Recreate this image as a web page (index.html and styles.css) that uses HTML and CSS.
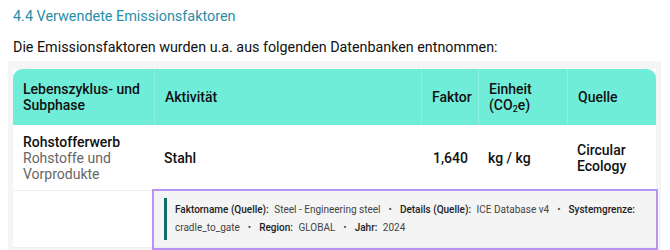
FILE: index.html
```html
<!DOCTYPE html>
<html lang="de">
<head>
<meta charset="utf-8">
<title>Emissionsfaktoren</title>
<link rel="stylesheet" href="styles.css">
</head>
<body>
<div class="page">
  <h2 class="section-title">4.4 Verwendete Emissionsfaktoren</h2>
  <p class="intro">Die Emissionsfaktoren wurden u.a. aus folgenden Datenbanken entnommen:</p>
  <div class="table-wrap">
    <table class="ef-table">
      <colgroup>
        <col class="c-phase">
        <col class="c-act">
        <col class="c-fak">
        <col class="c-unit">
        <col class="c-src">
      </colgroup>
      <thead>
        <tr>
          <th class="th-first">Lebenszyklus- und Subphase</th>
          <th>Aktivität</th>
          <th class="num">Faktor</th>
          <th>Einheit (CO<sub>2</sub>e)</th>
          <th class="th-last">Quelle</th>
        </tr>
      </thead>
      <tbody>
        <tr class="row-main">
          <td class="phase"><div class="phase-name">Rohstofferwerb</div><div class="phase-sub">Rohstoffe und Vorprodukte</div></td>
          <td class="strong">Stahl</td>
          <td class="strong num">1,640</td>
          <td class="strong">kg / kg</td>
          <td class="strong">Circular Ecology</td>
        </tr>
        <tr class="row-detail">
          <td class="empty"></td>
          <td colspan="4" class="detail-cell">
            <div class="detail">
              <span class="lbl">Faktorname (Quelle):</span> <span class="val">Steel - Engineering steel</span><span class="sep">•</span><span class="lbl">Details (Quelle):</span> <span class="val">ICE Database v4</span><span class="sep">•</span><span class="lbl">Systemgrenze:</span> <span class="val">cradle_to_gate</span><span class="sep">•</span><span class="lbl">Region:</span> <span class="val">GLOBAL</span><span class="sep">•</span><span class="lbl">Jahr:</span> <span class="val">2024</span>
            </div>
          </td>
        </tr>
      </tbody>
    </table>
  </div>
</div>
</body>
</html>
```

FILE: styles.css
```css
html, body {
  margin: 0;
  padding: 0;
  background: #ffffff;
}

body {
  font-family: Roboto, "Liberation Sans", Arial, sans-serif;
  color: #111111;
}

.page {
  padding: 7px 9px 0 8px;
}

.section-title {
  margin: 0 0 10px 5px;
  font-size: 14.4px;
  line-height: 20px;
  font-weight: 400;
  color: #2a8ea8;
}

.intro {
  margin: 0 0 4px 5px;
  font-size: 14.3px;
  line-height: 20px;
  color: #111111;
}

.table-wrap {
  background: #f5f5f5;
  padding: 8px 5px 0 5px;
  height: 181px;
  overflow: hidden;
}

.ef-table {
  width: 643px;
  table-layout: fixed;
  border-collapse: separate;
  border-spacing: 0;
  background: #ffffff;
  font-size: 14px;
  line-height: 16px;
  margin-bottom: 3px;
}

.c-phase { width: 141px; }
.c-act { width: 267px; }
.c-fak { width: 57px; }
.c-unit { width: 89px; }
.c-src { width: 89px; }

.ef-table th {
  background: #70edd9;
  color: #111111;
  font-weight: 500;
  text-align: left;
  vertical-align: middle;
  padding: 12px 10px;
  border-left: 1px solid #8ff1e2;
}

.ef-table th.th-first {
  border-left: none;
  border-top-left-radius: 9px;
}

.ef-table th.th-last {
  border-top-right-radius: 9px;
}

.ef-table th sub {
  font-size: 9px;
  line-height: 0;
  vertical-align: -2px;
}

.ef-table .num {
  text-align: right;
}

.ef-table td {
  padding: 9px 10px 8px 10px;
  vertical-align: middle;
  border-bottom: 1px solid #eeeeee;
}

.phase-name {
  font-weight: 500;
  color: #111111;
}

.phase-sub {
  color: #666666;
}

.strong {
  font-weight: 500;
  color: #111111;
}

.row-detail td {
  padding: 0;
}

.ef-table td.detail-cell {
  background: #f4f4f4;
  outline: 2px solid #b793f6;
  padding: 7px 10px 7px 10px;
}

.detail {
  border-left: 3px solid #0f6e69;
  padding: 3px 0 3px 8px;
  font-size: 10px;
  line-height: 18px;
  color: #444444;
}

.lbl {
  font-weight: 500;
  color: #222222;
  margin-right: 3px;
}

.val {
  color: #444444;
}

.sep {
  display: inline-block;
  margin: 0 8px;
  color: #555555;
}
```
